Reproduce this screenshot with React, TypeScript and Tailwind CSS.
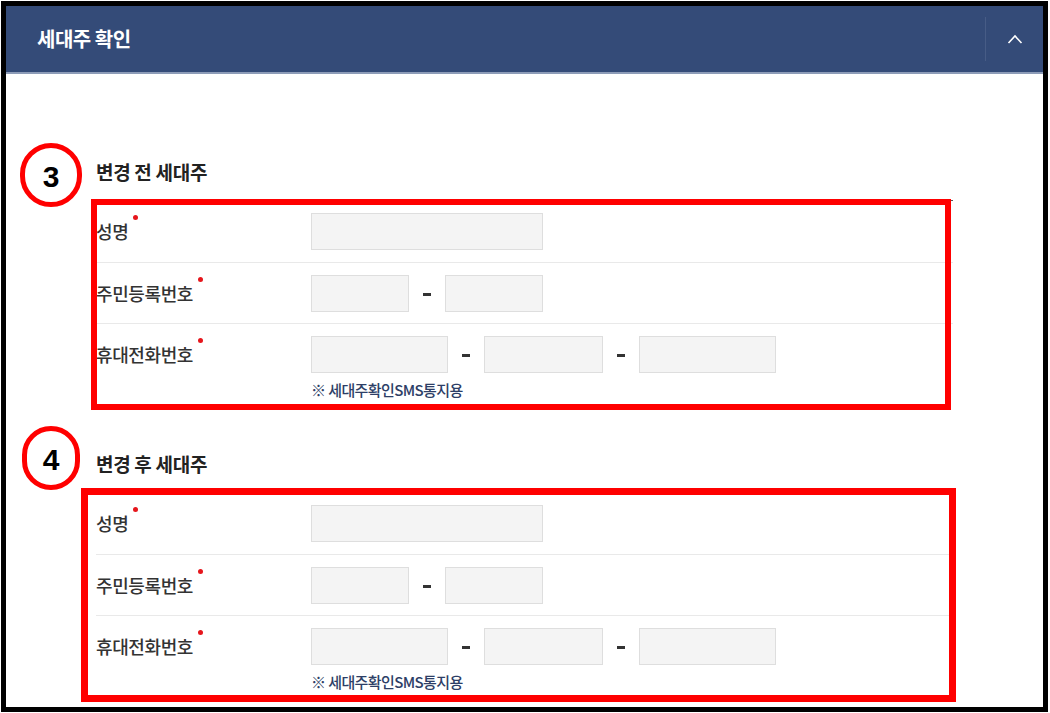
import React from "react";

const FONT = { fontFamily: '"Noto Sans CJK KR", "Noto Sans", sans-serif' };

const Label = ({ children }: { children: React.ReactNode }) => (
  <div className="w-[215px] shrink-0 flex items-center h-[37px]">
    <span className="relative text-[18px] font-medium text-[#333] tracking-[-0.4px]">
      {children}
      <span className="absolute -right-[10px] -top-[3px] w-[5px] h-[5px] rounded-full bg-[#e6161c]" />
    </span>
  </div>
);

const Input = ({ w }: { w: string }) => (
  <div className={`${w} h-[37px] bg-[#f4f4f4] border border-[#dedede]`} />
);

const Dash = () => (
  <div className="w-[36px] h-[37px] flex items-center justify-center">
    <span className="w-[8px] h-[3px] bg-[#333] mt-[2px]" />
  </div>
);

const Section = ({
  title,
  num,
  boxClass,
  circleClass,
}: {
  title: string;
  num: string;
  boxClass: string;
  circleClass: string;
}) => (
  <div className="relative">
    <div
      className={`absolute rounded-full border-[5px] border-[#ff0000] flex items-center justify-center ${circleClass}`}>
      <span
        className="text-[30px] font-bold text-black leading-none mt-[4px]"
        style={{ fontFamily: '"Liberation Sans", sans-serif' }}>
        {num}
      </span>
    </div>
    <div className="pl-[90px]">
      <h3 className="text-[19px] font-bold text-[#222] leading-[24px] tracking-[-0.3px]">
        {title}
      </h3>
      <div className="relative mt-[16px] w-[857px] border-t border-[#555]">
        <div className="flex items-start h-[62px] pt-[12px] border-b border-[#e9e9e9]">
          <Label>성명</Label>
          <Input w="w-[232px]" />
        </div>
        <div className="flex items-start h-[61px] pt-[12px] border-b border-[#e9e9e9]">
          <Label>주민등록번호</Label>
          <Input w="w-[98px]" />
          <Dash />
          <Input w="w-[98px]" />
        </div>
        <div className="flex items-start pt-[12px] pb-[8px]">
          <Label>휴대전화번호</Label>
          <div className="flex flex-col">
            <div className="flex">
              <Input w="w-[137px]" />
              <Dash />
              <Input w="w-[119px]" />
              <Dash />
              <Input w="w-[137px]" />
            </div>
            <p className="mt-[7px] text-[15px] font-medium leading-[20px] text-[#2d3e66] tracking-[-0.6px]">
              ※ 세대주확인SMS통지용
            </p>
          </div>
        </div>
        <div className={`absolute border-[#ff0000] ${boxClass}`} />
      </div>
    </div>
  </div>
);

export default function App() {
  return (
    <div className="w-[1050px] h-[713px] bg-white p-[1px]" style={FONT}>
      <div className="w-[1047px] h-[711px] border-[5px] border-black flex flex-col overflow-hidden">
        <header className="h-[68px] shrink-0 bg-[#344b78] border-b-2 border-[#8d9cb8] flex items-stretch">
          <h2 className="flex-1 flex items-center pl-[31px] text-[20px] font-bold text-white tracking-[-0.5px]">
            세대주 확인
          </h2>
          <div className="my-[11px] border-l border-[#475c86]" />
          <button className="w-[57px] flex items-center justify-center">
            <svg width="16" height="10" viewBox="0 0 16 10" fill="none">
              <polyline points="1.5,9 8,2 14.5,9" stroke="white" strokeWidth="1.6" />
            </svg>
          </button>
        </header>
        <div className="flex flex-col pt-[86px] gap-[44px]">
          <Section
            title="변경 전 세대주"
            num="3"
            circleClass="left-[14px] -top-[17px] w-[62px] h-[64px]"
            boxClass="-left-[5px] -top-[2px] w-[860px] h-[211px] border-[6px]"
          />
          <Section
            title="변경 후 세대주"
            num="4"
            circleClass="left-[16px] -top-[26px] w-[58px] h-[64px]"
            boxClass="-left-[15px] -top-[5px] w-[875px] h-[214px] border-[7px]"
          />
        </div>
      </div>
    </div>
  );
}
